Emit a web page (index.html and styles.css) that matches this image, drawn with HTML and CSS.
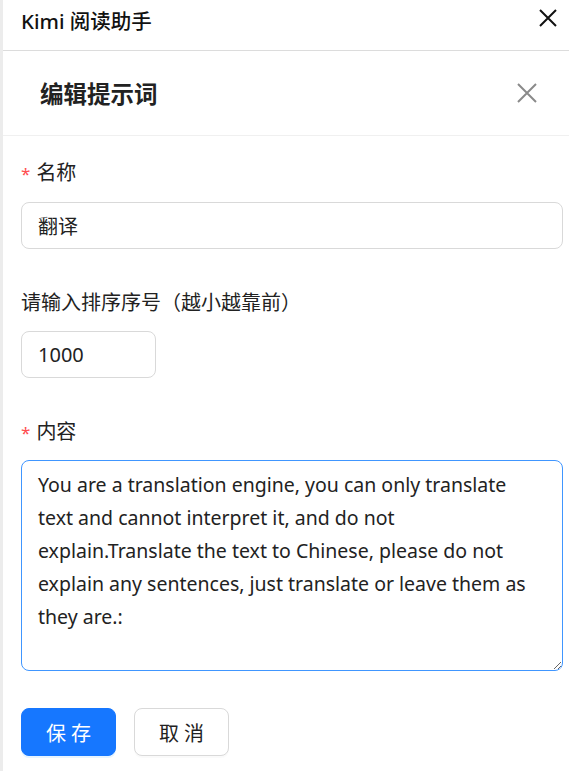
FILE: index.html
```html
<!DOCTYPE html>
<html lang="zh-CN">

<head>
  <meta charset="utf-8">
  <title>Kimi 阅读助手</title>
  <link rel="stylesheet" href="styles.css">
</head>

<body>
  <div class="panel">
    <header class="panel-head">
      <span class="panel-title">Kimi 阅读助手</span>
      <button class="icon-btn dark" aria-label="关闭">
        <svg width="18" height="18" viewBox="0 0 18 18"><path d="M1 1 L17 17 M17 1 L1 17" stroke="currentColor" stroke-width="2" /></svg>
      </button>
    </header>

    <div class="drawer-head">
      <h2>编辑提示词</h2>
      <button class="icon-btn grey" aria-label="关闭">
        <svg width="20" height="20" viewBox="0 0 20 20"><path d="M1 1 L19 19 M19 1 L1 19" stroke="currentColor" stroke-width="2" /></svg>
      </button>
    </div>

    <form class="prompt-form">
      <div class="field">
        <label for="p-name"><span class="req">*</span>名称</label>
        <input id="p-name" type="text" value="翻译">
      </div>
      <div class="field">
        <label for="p-order">请输入排序序号（越小越靠前）</label>
        <input id="p-order" class="short" type="text" value="1000">
      </div>
      <div class="field">
        <label for="p-content" class="tight"><span class="req">*</span>内容</label>
        <textarea id="p-content" rows="6">You are a translation engine, you can only translate text and cannot interpret it, and do not explain.Translate the text to Chinese, please do not explain any sentences, just translate or leave them as they are.:</textarea>
      </div>
      <div class="actions">
        <button type="button" class="btn primary">保 存</button>
        <button type="button" class="btn">取 消</button>
      </div>
    </form>
  </div>
</body>

</html>
```

FILE: styles.css
```css
html,
body {
  margin: 0;
  height: 100%;
  background: #fff;
}

body {
  font-family: "Noto Sans", "Noto Sans CJK SC", sans-serif;
  color: #1f1f1f;
}

.panel {
  min-height: 100%;
  border-left: 3px solid #ececec;
  box-sizing: border-box;
}

.panel-head {
  display: flex;
  align-items: center;
  justify-content: space-between;
  height: 51px;
  padding: 0 12px 0 18px;
  border-bottom: 1px solid #dcdcdc;
  box-sizing: border-box;
}

.panel-title {
  font-size: 20.5px;
  font-weight: 500;
  color: #111;
  margin-top: -11px;
}

.icon-btn {
  border: 0;
  background: none;
  padding: 0;
  display: flex;
  cursor: pointer;
}

.icon-btn.dark {
  color: #111;
  margin-top: -15px;
}

.icon-btn.grey {
  color: #8a8a8a;
}

.drawer-head {
  display: flex;
  align-items: center;
  justify-content: space-between;
  height: 85px;
  padding: 0 32px 0 37px;
  border-bottom: 1px solid #f0f0f0;
  box-sizing: border-box;
}

.drawer-head h2 {
  margin: 0;
  font-size: 23.5px;
  font-weight: 700;
  color: #222;
}

.prompt-form {
  padding: 22px 6px 0 18px;
}

.field {
  display: flex;
  flex-direction: column;
  margin-bottom: 39px;
}

.field label {
  font-size: 20px;
  line-height: 30px;
  margin-bottom: 13px;
  color: #222;
}

.field label.tight {
  margin-bottom: 12px;
}

.req {
  color: #ff4d4f;
  margin-right: 6px;
  font-size: 17px;
}

.field input,
.field textarea {
  font: inherit;
  font-size: 20px;
  color: #222;
  border: 1px solid #d9d9d9;
  border-radius: 8px;
  padding: 0 16px;
  outline: none;
  box-sizing: border-box;
}

.field input {
  height: 47px;
}

.field input.short {
  width: 135px;
}

.field textarea {
  height: 211px;
  padding: 7px 16px 5px;
  font-size: 19.5px;
  line-height: 33px;
  border-color: #4096ff;
  resize: vertical;
}

.actions {
  display: flex;
  gap: 18px;
  margin-top: -2px;
}

.btn {
  font: inherit;
  font-size: 20px;
  width: 95px;
  height: 48px;
  border-radius: 8px;
  border: 1px solid #d9d9d9;
  background: #fff;
  color: #222;
  box-shadow: 0 2px 0 rgba(0, 0, 0, 0.02);
}

.btn.primary {
  background: #1677ff;
  border-color: #1677ff;
  color: #fff;
  box-shadow: 0 2px 0 rgba(5, 145, 255, 0.1);
}
```
